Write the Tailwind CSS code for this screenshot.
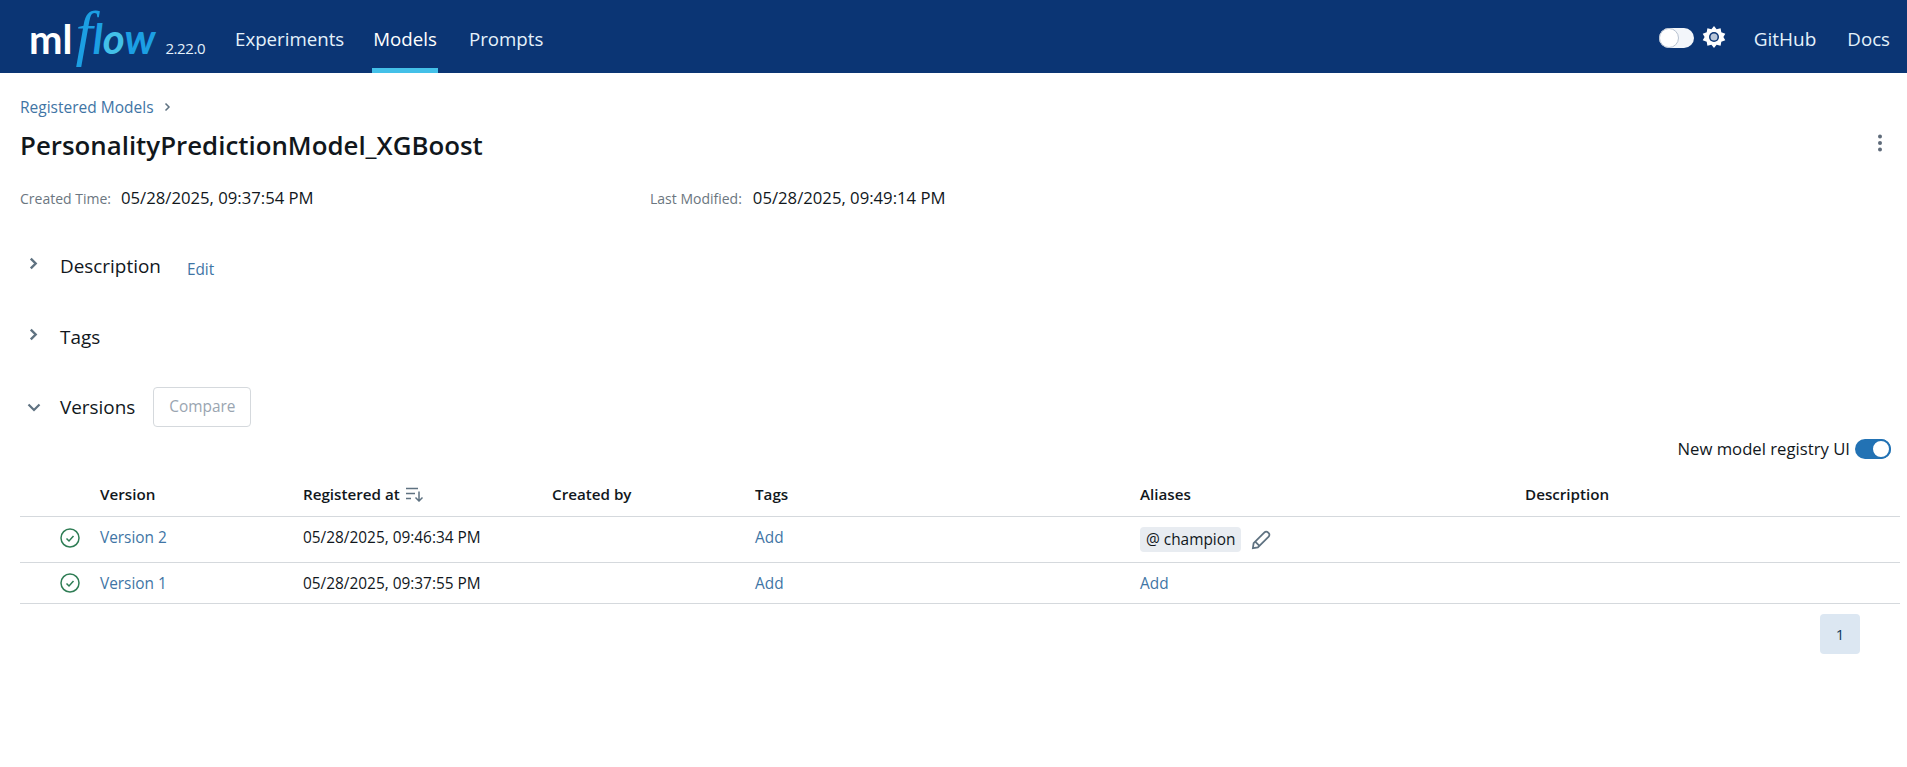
<!DOCTYPE html>
<html lang="en">
<head>
<meta charset="utf-8">
<title>PersonalityPredictionModel_XGBoost - MLflow Model</title>
<script src="https://cdn.jsdelivr.net/npm/@tailwindcss/browser@4"></script>
</head>
<body class="bg-white font-['Open_Sans',sans-serif] text-[#11171c] h-[767px] overflow-hidden">
  <!-- top nav -->
  <header class="h-[73px] bg-[#0b3574] flex items-center pl-[29px] pr-[17px] text-[#e4f1fb]">
    <div class="flex items-baseline w-[177px] h-full pt-[7px]">
      <span class="font-['Lato',sans-serif] font-bold text-[40px] leading-[52px] text-white">ml</span><span class="font-['Liberation_Serif',serif] italic text-[62px] leading-[52px] text-[#1c9fe3] ml-[3px]">f</span><span class="font-['Lato',sans-serif] font-bold italic text-[42px] leading-[52px] text-[#1c9fe3]">l<span class="text-[#43c0e8]">o</span>w</span>
      <span class="text-[15px] tracking-[-0.4px] ml-[10px]">2.22.0</span>
    </div>
    <nav class="flex h-full text-[18.700px] ml-[29px]">
      <a class="flex items-center pt-[6px]">Experiments</a>
      <a class="ml-[28px] px-[1px] flex items-center border-b-[5px] border-[#43c0e8] pt-[11px] text-white">Models</a>
      <a class="ml-[31px] flex items-center pt-[6px]">Prompts</a>
    </nav>
    <div class="ml-auto flex items-center">
      <span class="mt-[2px] w-[35px] h-[20px] rounded-full bg-[#f3f6fa] flex items-center">
        <span class="w-[20px] h-[20px] rounded-full bg-white border border-[#b8c2d0]"></span>
      </span>
      <svg class="ml-[8px] w-[24px] h-[24px]" viewBox="0 0 24 24">
        <path fill="#fff" d="M12 1l2.600 3.200 4-1 .7 4.100 4 1.400L21.400 12l1.900 3.300-4 1.400-.7 4.100-4-1L12 23l-2.600-3.200-4 1-.7-4.100-4-1.400L2.600 12 .7 8.700l4-1.400.7-4.100 4 1L12 1z"/>
        <circle cx="12" cy="12" r="5" fill="#0b3574"/>
        <circle cx="12" cy="12" r="3.500" fill="#b9c6d8"/>
      </svg>
      <a class="ml-[28px] mt-[6px] text-[19px]">GitHub</a>
      <a class="ml-[31px] mt-[6px] text-[18.700px]">Docs</a>
    </div>
  </header>

  <main class="px-[20px]">
    <!-- breadcrumb and title -->
    <div class="pt-[24px] flex items-center text-[15.500px] leading-[20px] text-[#3f75a5]">
      <a>Registered Models</a>
      <svg class="ml-[8px] w-[10px] h-[10px] text-[#5f7281]" viewBox="0 0 10 10" fill="none" stroke="currentColor" stroke-width="1.500"><path d="M3.500 1.500L7 5 3.500 8.500"/></svg>
    </div>
    <div class="mt-[10px] flex items-center justify-between">
      <h1 class="text-[25.850px] leading-[36px] font-semibold">PersonalityPredictionModel_XGBoost</h1>
      <svg class="w-[4px] h-[18px] mr-[5px] mb-[4px]" viewBox="0 0 4 18" fill="#5f6b7a"><circle cx="2" cy="2.500" r="2"/><circle cx="2" cy="9" r="2"/><circle cx="2" cy="15.500" r="2"/></svg>
    </div>
    <div class="mt-[23px] flex items-center h-[24px]">
      <div class="w-[630px] flex items-center">
        <span class="text-[14px] text-[#6b7680]">Created Time:</span>
        <span class="ml-[10px] text-[16.700px]">05/28/2025, 09:37:54 PM</span>
      </div>
      <span class="text-[14px] text-[#6b7680]">Last Modified:</span>
      <span class="ml-[11px] text-[16.700px]">05/28/2025, 09:49:14 PM</span>
    </div>

    <!-- collapsible sections -->
    <section class="mt-[42px] h-[28px] flex items-center">
      <svg class="w-[13px] h-[13px] ml-[7px] mb-[6px] text-[#5f7281]" viewBox="0 0 12 12" fill="none" stroke="currentColor" stroke-width="2.200"><path d="M3.500 1.500L8 6l-4.500 4.500"/></svg>
      <h2 class="ml-[20px] text-[18.900px]">Description</h2>
      <a class="ml-[26px] mt-[8px] text-[15.400px] text-[#3f75a5]">Edit</a>
    </section>
    <section class="mt-[43px] h-[28px] flex items-center">
      <svg class="w-[13px] h-[13px] ml-[7px] mb-[6px] text-[#5f7281]" viewBox="0 0 12 12" fill="none" stroke="currentColor" stroke-width="2.200"><path d="M3.500 1.500L8 6l-4.500 4.500"/></svg>
      <h2 class="ml-[20px] text-[18.900px]">Tags</h2>
    </section>
    <section class="mt-[36px] h-[40px] flex items-center">
      <svg class="w-[14px] h-[14px] ml-[7px] text-[#5f7281]" viewBox="0 0 14 14" fill="none" stroke="currentColor" stroke-width="2.200"><path d="M1.500 4.500L7 10l5.500-5.500"/></svg>
      <h2 class="ml-[19px] text-[18.900px]">Versions</h2>
      <button class="ml-[18px] w-[98px] h-[40px] rounded-[4px] border border-[#d5d9dd] text-[15.400px] text-[#9aa5b1]">Compare</button>
    </section>

    <div class="mt-[12px] flex items-center justify-end mr-[-4px] h-[20px]">
      <span class="text-[16.700px]">New model registry UI</span>
      <span class="ml-[5px] w-[36px] h-[20px] rounded-full bg-[#2272b4] flex items-center justify-end">
        <span class="w-[20px] h-[20px] rounded-full bg-white border-2 border-[#2272b4]"></span>
      </span>
    </div>

    <!-- versions table -->
    <div class="mt-[14px] w-[1880px] text-[15.400px]">
      <div class="grid grid-cols-[80px_203px_249px_203px_385px_385px_1fr] h-[44px] items-center text-[15.200px] font-semibold border-b border-[#d5d9dd]">
        <span></span>
        <span>Version</span>
        <span class="flex items-center">Registered at
          <svg class="ml-[5px] w-[19px] h-[16px] text-[#5f7281]" viewBox="0 0 19 16" fill="none" stroke="currentColor" stroke-width="1.500"><path d="M1 2.500h12M1 7.500h9M1 12.500h5"/><path d="M14 5.500v9.500M10.500 11.500l3.500 3.500 3.500-3.500"/></svg>
        </span>
        <span>Created by</span>
        <span>Tags</span>
        <span>Aliases</span>
        <span>Description</span>
      </div>
      <div class="grid grid-cols-[80px_203px_249px_203px_385px_385px_1fr] h-[46px] items-center border-b border-[#d5d9dd]">
        <span class="flex pl-[40px] pb-[3px]">
          <svg class="w-[20px] h-[20px] text-[#2f7d55]" viewBox="0 0 20 20" fill="none" stroke="currentColor" stroke-width="1.500"><circle cx="10" cy="10" r="9"/><path d="M6.500 10.500l2.500 2.500 4.500-5"/></svg>
        </span>
        <a class="text-[#3f75a5] pb-[3px]">Version 2</a>
        <span class="pb-[3px]">05/28/2025, 09:46:34 PM</span>
        <span></span>
        <a class="text-[#3f75a5] pb-[3px]">Add</a>
        <span class="flex items-center">
          <span class="h-[25px] px-[6px] rounded-[4px] bg-[#e8ecf1] flex items-center">@ champion</span>
          <svg class="ml-[10px] w-[20px] h-[20px] text-[#5f7281]" viewBox="0 0 19 19" fill="none" stroke="currentColor" stroke-width="1.700"><path d="M1.800 17.200l.7-4.700L12.800 2.200a2.300 2.300 0 013.300 0l.7.7a2.300 2.300 0 010 3.300L6.500 16.500z"/><path d="M4 11l4 4"/></svg>
        </span>
        <span></span>
      </div>
      <div class="grid grid-cols-[80px_203px_249px_203px_385px_385px_1fr] h-[41px] items-center border-b border-[#d5d9dd]">
        <span class="flex pl-[40px]">
          <svg class="w-[20px] h-[20px] text-[#2f7d55]" viewBox="0 0 20 20" fill="none" stroke="currentColor" stroke-width="1.500"><circle cx="10" cy="10" r="9"/><path d="M6.500 10.500l2.500 2.500 4.500-5"/></svg>
        </span>
        <a class="text-[#3f75a5] pt-[1px]">Version 1</a>
        <span class="pt-[1px]">05/28/2025, 09:37:55 PM</span>
        <span></span>
        <a class="text-[#3f75a5] pt-[1px]">Add</a>
        <a class="text-[#3f75a5] pt-[1px]">Add</a>
        <span></span>
      </div>
    </div>

    <!-- pagination -->
    <div class="mt-[10px] flex justify-end pr-[27px]">
      <span class="w-[40px] h-[40px] rounded-[4px] bg-[#dce7f2] text-[#0e3a5e] text-[15px] flex items-center justify-center">1</span>
    </div>
  </main>
</body>
</html>
